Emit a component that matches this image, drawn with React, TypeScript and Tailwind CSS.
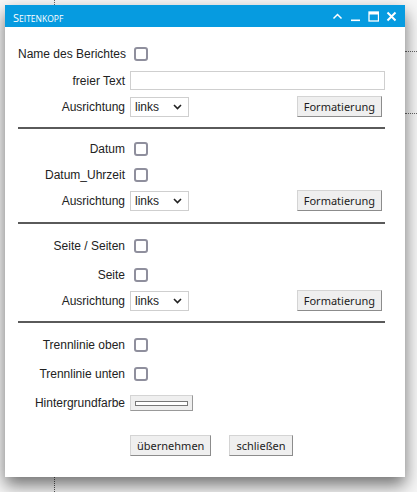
import React from "react";

const font = { fontFamily: '"Liberation Sans", Arial, sans-serif' };

function Check() {
  return <span className="inline-block w-[14px] h-[14px] rounded-[3px] border-2 border-[#8f8f9d] bg-white" />;
}

function Btn({ children }: { children: React.ReactNode }) {
  return (
    <button className="h-[21px] px-[6px] bg-[#efefef] border border-[#d4d4d4] border-r-[#8c8c8c] border-b-[#8c8c8c] text-[11px] text-[#1c1c1c] leading-none font-['Noto_Sans',sans-serif]">
      {children}
    </button>
  );
}

function Select() {
  return (
    <div className="w-[59px] h-[20px] border border-[#cfcfcf] bg-white flex items-center justify-between pl-[4px] pr-[6px] text-[12px] text-[#222]">
      <span>links</span>
      <svg width="9" height="6" viewBox="0 0 9 6">
        <path d="M1 1l3.5 3.5L8 1" fill="none" stroke="#222" strokeWidth="1.6" />
      </svg>
    </div>
  );
}

function Row({ label, h, mt = 0, children }: { label: string; h: number; mt?: number; children?: React.ReactNode }) {
  return (
    <div className="flex items-center" style={{ height: h, marginTop: mt }}>
      <div className="w-[107px] text-right text-[12px] text-[#222] whitespace-nowrap">{label}</div>
      <div className="flex-1 flex items-center pl-[9px]">{children}</div>
    </div>
  );
}

function Align({ mt = 0 }: { mt?: number }) {
  return (
    <div className="flex items-center" style={{ height: 25, marginTop: mt }}>
      <div className="w-[107px] text-right text-[12px] text-[#222]">Ausrichtung</div>
      <div className="flex-1 flex items-center justify-between pl-[5px] pr-[3px]">
        <Select />
        <Btn>Formatierung</Btn>
      </div>
    </div>
  );
}

function Hr({ mt }: { mt: number }) {
  return <div className="h-[2px] bg-[#5a5a5a]" style={{ marginTop: mt }} />;
}

export default function App() {
  return (
    <div className="relative w-[417px] h-[492px] bg-[#f7f7f7] overflow-hidden" style={font}>
      <div className="absolute left-[54px] top-0 h-[5px] border-l border-dotted border-[#666]" />
      <div className="absolute left-[54px] top-[477px] h-[15px] border-l border-dotted border-[#555]" />
      <div className="absolute left-[405px] top-[51px] w-[12px] border-t border-dotted border-[#666]" />
      <div className="absolute left-[405px] top-[113px] w-[12px] border-t border-dotted border-[#666]" />
      <div className="absolute left-[5px] top-[5px] w-[400px] h-[472px] bg-white shadow-[0_8px_16px_rgba(0,0,0,0.55)] flex flex-col">
        <div className="h-[22px] bg-[#069be0] flex items-center justify-between pl-[8px] pr-[8px]">
          <span className="text-white font-['Open_Sans',sans-serif] leading-none">
            <span className="text-[11px]">S</span>
            <span className="text-[8.5px]">EITENKOPF</span>
          </span>
          <div className="flex items-center gap-[7px]">
            <svg width="11" height="11" viewBox="0 0 11 11">
              <path d="M1.5 7.5L5.5 3.5l4 4" fill="none" stroke="#fff" strokeWidth="1.5" />
            </svg>
            <svg width="11" height="11" viewBox="0 0 11 11">
              <rect x="1" y="8.5" width="9" height="1.6" fill="#fff" />
            </svg>
            <svg width="11" height="11" viewBox="0 0 11 11">
              <rect x="1" y="1" width="9.5" height="9" fill="none" stroke="#fff" strokeWidth="1.3" />
              <rect x="1" y="1" width="9.5" height="2.5" fill="#fff" />
            </svg>
            <svg width="11" height="11" viewBox="0 0 11 11">
              <path d="M1.5 1.5l8 8M9.5 1.5l-8 8" stroke="#fff" strokeWidth="2" />
            </svg>
          </div>
        </div>
        <div className="flex flex-col pl-[13px] pr-[20px] pt-[14px]">
          <Row label="Name des Berichtes" h={26}>
            <Check />
          </Row>
          <Row label="freier Text" h={27}>
            <div className="ml-[-4px] w-[255px] h-[19px] border border-[#cfcfcf] bg-white" />
          </Row>
          <Align />
          <Hr mt={8} />
          <Row label="Datum" h={26} mt={7}>
            <Check />
          </Row>
          <Row label="Datum_Uhrzeit" h={26}>
            <Check />
          </Row>
          <Align />
          <Hr mt={9} />
          <Row label="Seite / Seiten" h={26} mt={9}>
            <Check />
          </Row>
          <Row label="Seite" h={26} mt={3}>
            <Check />
          </Row>
          <Align />
          <Hr mt={8} />
          <Row label="Trennlinie oben" h={26} mt={9}>
            <Check />
          </Row>
          <Row label="Trennlinie unten" h={26} mt={3}>
            <Check />
          </Row>
          <Row label="Hintergrundfarbe" h={26} mt={3}>
            <div className="ml-[-4px] w-[63px] h-[16px] bg-[#efefef] border border-[#d4d4d4] border-r-[#999] border-b-[#999] flex items-center justify-center">
              <div className="w-[53px] h-[5px] bg-white border border-[#777]" />
            </div>
          </Row>
          <div className="flex items-center h-[26px] mt-[16px] pl-[112px] gap-[18px]">
            <Btn>übernehmen</Btn>
            <Btn>schließen</Btn>
          </div>
        </div>
      </div>
    </div>
  );
}
